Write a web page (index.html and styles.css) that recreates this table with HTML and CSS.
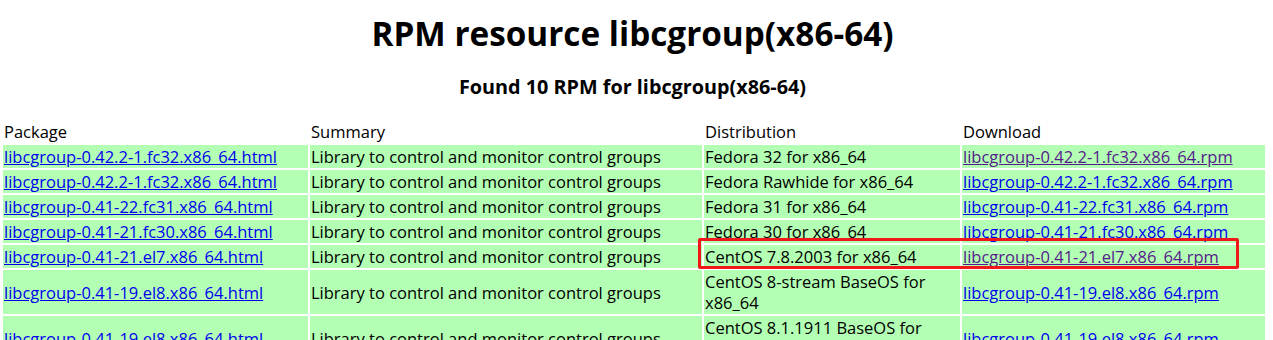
FILE: index.html
```html
<!DOCTYPE html>
<html>
<head>
<meta charset="utf-8">
<title>RPM resource libcgroup(x86-64)</title>
<link rel="stylesheet" href="styles.css">
</head>
<body>
<h1 class="title">RPM resource libcgroup(x86-64)</h1>
<h3 class="subtitle">Found 10 RPM for libcgroup(x86-64)</h3>
<div class="wrap">
<table class="rpms">
<colgroup>
<col class="c-pkg"><col class="c-sum"><col class="c-dist"><col class="c-dl">
</colgroup>
<thead>
<tr class="head"><th>Package</th><th>Summary</th><th>Distribution</th><th>Download</th></tr>
</thead>
<tbody>
<tr><td><a href="#">libcgroup-0.42.2-1.fc32.x86_64.html</a></td><td>Library to control and monitor control groups</td><td>Fedora 32 for x86_64</td><td><a class="visited" href="#">libcgroup-0.42.2-1.fc32.x86_64.rpm</a></td></tr>
<tr><td><a href="#">libcgroup-0.42.2-1.fc32.x86_64.html</a></td><td>Library to control and monitor control groups</td><td>Fedora Rawhide for x86_64</td><td><a href="#">libcgroup-0.42.2-1.fc32.x86_64.rpm</a></td></tr>
<tr><td><a href="#">libcgroup-0.41-22.fc31.x86_64.html</a></td><td>Library to control and monitor control groups</td><td>Fedora 31 for x86_64</td><td><a href="#">libcgroup-0.41-22.fc31.x86_64.rpm</a></td></tr>
<tr><td><a href="#">libcgroup-0.41-21.fc30.x86_64.html</a></td><td>Library to control and monitor control groups</td><td>Fedora 30 for x86_64</td><td><a href="#">libcgroup-0.41-21.fc30.x86_64.rpm</a></td></tr>
<tr><td><a href="#">libcgroup-0.41-21.el7.x86_64.html</a></td><td>Library to control and monitor control groups</td><td>CentOS 7.8.2003 for x86_64</td><td><a class="visited" href="#">libcgroup-0.41-21.el7.x86_64.rpm</a></td></tr>
<tr><td><a href="#">libcgroup-0.41-19.el8.x86_64.html</a></td><td>Library to control and monitor control groups</td><td>CentOS 8-stream BaseOS for x86_64</td><td><a href="#">libcgroup-0.41-19.el8.x86_64.rpm</a></td></tr>
<tr><td><a href="#">libcgroup-0.41-19.el8.x86_64.html</a></td><td>Library to control and monitor control groups</td><td>CentOS 8.1.1911 BaseOS for x86_64</td><td><a href="#">libcgroup-0.41-19.el8.x86_64.rpm</a></td></tr>
<tr><td><a href="#">libcgroup-0.41-19.el8.x86_64.html</a></td><td>Library to control and monitor control groups</td><td>CentOS 8.0.1905 BaseOS for x86_64</td><td><a href="#">libcgroup-0.41-19.el8.x86_64.rpm</a></td></tr>
</tbody>
</table>
<div class="highlight"></div>
</div>
</body>
</html>
```
FILE: styles.css
```css
html, body {
  margin: 0;
  padding: 0;
  background: #ffffff;
}
body {
  font-family: "Open Sans", "Noto Sans CJK SC", sans-serif;
  font-size: 16.5px;
  line-height: 21px;
  color: #000000;
}
.title {
  margin: 0;
  padding-top: 12px;
  height: 42px;
  font-size: 33.3px;
  line-height: 42px;
  font-weight: 700;
  text-align: center;
  padding-right: 8px;
}
.subtitle {
  margin: 0;
  padding-top: 20px;
  height: 26px;
  font-size: 19.8px;
  line-height: 26px;
  font-weight: 700;
  text-align: center;
  padding-right: 8px;
}
.wrap {
  position: relative;
  margin-top: 18px;
}
.rpms {
  margin-left: 1px;
  border-collapse: separate;
  border-spacing: 2px;
  table-layout: fixed;
  width: 1262px;
}
.c-pkg { width: 305px; }
.c-sum { width: 392px; }
.c-dist { width: 256px; }
.c-dl { width: 303px; }
.rpms th {
  font-weight: 400;
  text-align: left;
  padding: 1px;
  background: #ffffff;
}
.rpms td {
  padding: 1px;
  background: #b3ffb3;
  vertical-align: middle;
}
.rpms a {
  color: #0000ee;
  text-decoration: underline;
}
.rpms a.visited {
  color: #551a8b;
}
.highlight {
  position: absolute;
  left: 698px;
  top: 120px;
  width: 535px;
  height: 25px;
  border: 3px solid #f01818;
  border-radius: 2px;
  pointer-events: none;
}
```
